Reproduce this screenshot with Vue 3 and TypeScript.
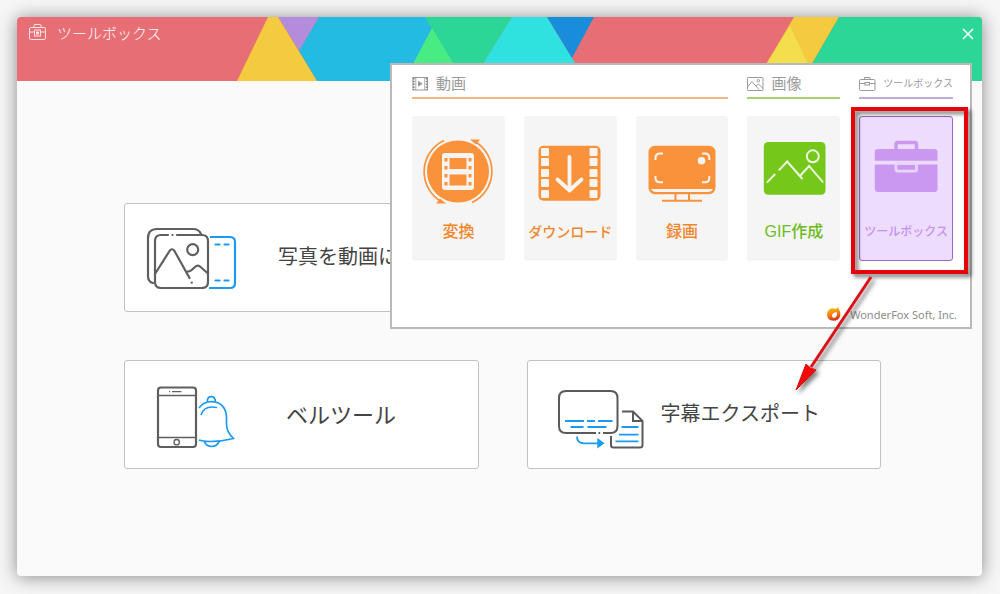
<script setup lang="ts">
import { ref } from 'vue'

type ToolId = 'convert' | 'download' | 'record' | 'gif' | 'toolbox'

interface Tool {
  id: ToolId
  label: string
  tone: string
}

interface Action {
  id: 'photo' | 'bell' | 'subtitle'
  label: string
}

const tools: Tool[] = [
  { id: 'convert', label: '変換', tone: 'orange' },
  { id: 'download', label: 'ダウンロード', tone: 'orange medium' },
  { id: 'record', label: '録画', tone: 'orange' },
  { id: 'gif', label: 'GIF作成', tone: 'green' },
  { id: 'toolbox', label: 'ツールボックス', tone: 'purple small' },
]

const actions: Action[] = [
  { id: 'photo', label: '写真を動画に' },
  { id: 'bell', label: 'ベルツール' },
  { id: 'subtitle', label: '字幕エクスポート' },
]

const selected = ref<ToolId>('toolbox')
const perforations: number[] = [11, 21, 32, 42, 53]
const filmHoles: number[] = [21, 29, 37, 45]
</script>

<template>
  <div class="page">
    <div class="window">
      <header class="banner">
        <svg class="banner-art" viewBox="0 0 965 64" preserveAspectRatio="none" aria-hidden="true">
          <rect width="965" height="64" fill="#e76e75" />
          <polygon points="261,0 302,0 282,34" fill="#b38cdb" />
          <polygon points="302,0 409,0 415,12 387,64 300,64 282,34" fill="#24bbe3" />
          <polygon points="251,0 261,0 300,64 220,64" fill="#f4ca3e" />
          <polygon points="408,0 495,0 455,64 446,64" fill="#2cd697" />
          <polygon points="415,11 387,64 447,64" fill="#49ec83" />
          <polygon points="495,0 530,0 569,64 455,64" fill="#30e2df" />
          <polygon points="530,0 577,0 555,41" fill="#1a8dda" />
          <polygon points="777,0 822,0 785,64 739,64" fill="#f4ca3e" />
          <polygon points="773,9 739,64 799,64" fill="#f4de4e" />
          <polygon points="822,0 965,0 965,64 785,64" fill="#2cd697" />
        </svg>
        <h1 class="title">
          <svg class="title-icon" viewBox="0 0 18 16" aria-hidden="true">
            <g fill="none" stroke="#fbe3e4" stroke-width="1">
              <rect x="0.500" y="3.500" width="16" height="12" rx="1.500" />
              <path d="M5 3.500V1.500Q5 .500 6 .500h5Q12 .500 12 1.500v2M.500 8h5M11.500 8h5" />
              <rect x="5.500" y="6" width="6" height="6" />
              <rect x="7.500" y="8" width="2" height="2" />
            </g>
          </svg>
          ツールボックス
        </h1>
        <button class="close" type="button" aria-label="閉じる">
          <svg viewBox="0 0 12 12" aria-hidden="true">
            <path d="M1 1l10 10M11 1l-10 10" stroke="#fff" stroke-width="1.500" />
          </svg>
        </button>
      </header>

      <main class="actions">
        <button v-for="a in actions" :key="a.id" type="button" class="action" :class="a.id">
          <svg class="action-icon" viewBox="0 0 96 73" aria-hidden="true">
            <g v-if="a.id === 'photo'" fill="none" stroke-width="2.200" stroke-linecap="round">
              <g stroke="#5f5f5f">
                <path d="M57 13Q55 8 49 8H13Q4 8 4 17V55Q4 61 9 62" />
                <path d="M33 14H58Q64 14 64 20V61Q64 67 58 67H17Q11 67 11 61V20Q11 14 17 14H24M28.500 14h.1" />
                <circle cx="48.700" cy="28.700" r="5.500" />
                <path d="M11 53L25.500 30Q28 26.500 30.500 30L45.500 57M47.700 61.700h.1" />
                <path d="M43.300 50.500Q46 51 51 46Q53.500 43.500 56 45.500L64 52.500" />
              </g>
              <path stroke="#1a9af0" stroke-linecap="butt" d="M66 16H86Q91 16 91 21V62Q91 67 86 67H65" />
              <path stroke="#1a9af0" d="M71.500 23.500h4M80.500 23.500h4M71.500 59.500h4M80.500 59.500h4" />
            </g>
            <g v-else-if="a.id === 'bell'" fill="none">
              <g stroke="#5f5f5f">
                <rect x="14" y="9.500" width="38" height="59.500" rx="3" stroke-width="2.200" />
                <path d="M14 17.500H52M14 59.500H52M28 13.700H37.500M25 13.700h1.200" stroke-width="1.300" />
                <circle cx="32.700" cy="64.200" r="2.700" stroke-width="1.300" />
              </g>
              <g stroke="#1a9af0" stroke-width="1.700">
                <path d="M63.300 23.700Q63.300 18.700 67.300 18.700Q71.300 18.700 71.300 23.700" />
                <path d="M55 30Q59.500 23.700 67.300 23.700C77 23.700 82.500 30 82.500 40V46Q82.500 54 89.500 60.500Q78 63.500 66 63.500Q58 63.300 55 62" />
                <path d="M57 37Q60 27 73 29.500M60.300 63.700Q62.500 68.500 67.500 68.500Q73 68.500 75 63.700" />
              </g>
            </g>
            <g v-else fill="none">
              <g stroke="#5a5a5a" stroke-width="2">
                <path d="M49 55H19Q12 55 12 48V20Q12 13 19 13H63.500Q70.500 13 70.500 20V48Q70.500 55 63.500 55H56M51.500 55h1.700" />
                <path d="M75 33.500H86L95.500 43V67Q95.500 69.500 93 69.500H66.500Q64 69.500 64 67V58M86 33.500V43H95.500" />
              </g>
              <path stroke="#1a9af0" stroke-width="1.800" d="M18 43H37M40 43h8M51 43H65.500M23.500 49H36.500M40.500 49H59.500M74.500 49H91.500M72 56.700H91.500M68.500 63.300H91.500M30 58.500Q30 65.300 37 65.300H51" />
              <polygon points="50.300,60 57.500,65.300 50.300,70.600" fill="#1a9af0" />
            </g>
          </svg>
          <span class="action-label">{{ a.label }}</span>
        </button>
      </main>

      <section class="panel">
        <div class="grid">
          <h2 class="group video">
            <svg viewBox="0 0 17 16" aria-hidden="true">
              <rect x="1" y="1.500" width="14.500" height="12.500" fill="none" stroke="#999" stroke-width="1" />
              <path d="M1.700 2V14M14.800 2V14" stroke="#888" stroke-width="2" stroke-dasharray="1.500 1.300" />
              <path d="M3.800 1.500V14M12.700 1.500V14" stroke="#999" stroke-width=".8" />
              <polygon points="6,4.800 10.800,7.800 6,10.800" fill="#999" />
            </svg>
            動画
          </h2>
          <h2 class="group image">
            <svg viewBox="0 0 17 16" aria-hidden="true">
              <g fill="none" stroke="#999" stroke-width="1">
                <rect x=".500" y="1.500" width="15.500" height="13" rx=".800" />
                <path d="M.800 10.500L5 5.500L12 13.500M9 9.800L11.500 8L16 12.500" />
                <circle cx="11.300" cy="4.800" r="1.300" />
              </g>
            </svg>
            画像
          </h2>
          <h2 class="group box">
            <svg viewBox="0 0 17 16" aria-hidden="true">
              <g fill="none" stroke="#999" stroke-width="1">
                <rect x=".500" y="3.500" width="15.500" height="11" rx="1.200" />
                <path d="M5.500 3.500V1.500H11V3.500M.500 7.500H6M10.500 7.500H16" />
                <rect x="6" y="6.500" width="4.500" height="2.500" />
              </g>
            </svg>
            ツールボックス
          </h2>

          <div v-for="t in tools" :key="t.id" class="cell">
            <button
              type="button"
              class="tool"
              :class="[t.tone, { selected: selected === t.id }]"
              :aria-pressed="selected === t.id"
              @click="selected = t.id"
            >
              <svg class="tool-icon" viewBox="0 0 72 68" aria-hidden="true">
                <g v-if="t.id === 'convert'">
                  <circle cx="36" cy="34.500" r="31" fill="#f9923a" />
                  <g fill="none" stroke="#f9923a" stroke-width="1.700">
                    <path d="M22 3.500A34.500 34.500 0 0 0 20 65" />
                    <path d="M50 65.500A34.500 34.500 0 0 0 52 4" />
                  </g>
                  <path d="M14 66.500H24L18 61.500ZM58 2.500H48L54 7.500Z" fill="#f9923a" />
                  <rect x="20" y="16" width="32" height="37" rx="3" fill="#f8f4f1" />
                  <path d="M27.500 21H44.500V32H27.500ZM27.500 37.500H44.500V48.500H27.500Z" fill="#f9923a" />
                  <g fill="#f9923a">
                    <rect v-for="y in filmHoles" :key="y" x="22.500" :y="y" width="3" height="3.500" />
                    <rect v-for="y in filmHoles" :key="'r' + y" x="46.500" :y="y" width="3" height="3.500" />
                  </g>
                </g>
                <g v-else-if="t.id === 'download'">
                  <rect x="4.500" y="8.700" width="62" height="55" rx="5" fill="#f9923a" />
                  <g fill="#f8f4f1">
                    <rect v-for="y in perforations" :key="y" x="7" :y="y" width="8" height="8" rx="1" />
                    <rect v-for="y in perforations" :key="'r' + y" x="55.500" :y="y" width="8" height="8" rx="1" />
                  </g>
                  <path d="M35.500 20V53M23.500 42.500L35.500 53.500L47.500 42.500" fill="none" stroke="#f8f4f1" stroke-width="3.800" stroke-linecap="round" stroke-linejoin="round" />
                </g>
                <g v-else-if="t.id === 'record'">
                  <rect x="2.500" y="8.700" width="67" height="48.500" rx="6.500" fill="#f9923a" />
                  <path d="M5 52H67Q65.500 55 62 55H10Q6.500 55 5 52Z" fill="#f8f4f1" />
                  <path d="M29.500 57V63.500M43 57V63.500M16 63.700H56" stroke="#f9923a" stroke-width="2" />
                  <path d="M9.500 23V21Q9.500 16.500 14 16.500H17M56 16.500H59Q63.300 16.500 63.300 21V23M9.500 39V41Q9.500 45.300 14 45.300H17M56 45.300H59Q63.300 45.300 63.300 41V39" fill="none" stroke="#f8f4f1" stroke-width="2" />
                  <circle cx="55.500" cy="23.700" r="3.800" fill="#f8f4f1" />
                </g>
                <g v-else-if="t.id === 'gif'">
                  <rect x="5.800" y="5" width="61.700" height="52.700" rx="4.500" fill="#75c819" />
                  <g fill="none" stroke="#f1f8e8" stroke-width="1.900">
                    <circle cx="54.800" cy="19.300" r="6" />
                    <path d="M8.800 45.700L17.200 37M20.800 33.300L29.200 24.500L44.500 42M41.500 39.500L51 29L65.200 45.500" />
                  </g>
                </g>
                <g v-else>
                  <rect x="26" y="5.500" width="20.500" height="9" rx="2" fill="none" stroke="#ca98f1" stroke-width="3.500" />
                  <path d="M8 12H64.500Q67.500 12 67.500 15V23.700H4.800V15Q4.800 12 8 12ZM4.800 27.500H67.500V52Q67.500 55 64.500 55H8Q4.800 55 4.800 52Z" fill="#ca98f1" />
                  <path d="M26 26.500V32.500Q26 34.200 27.700 34.200H44.800Q46.500 34.200 46.500 32.500V26.500Z" fill="#ca98f1" stroke="#e9d4fc" stroke-width="2.800" />
                </g>
              </svg>
              <span>{{ t.label }}</span>
            </button>
            <template v-if="selected === t.id">
              <span class="marker"></span>
              <svg class="arrow" viewBox="0 0 100 130" aria-hidden="true">
                <path d="M84 6L24 96" stroke="#dd1216" stroke-width="3" />
                <polygon points="9,119 19,93 23.500,97 29,99" fill="#fb0505" stroke="#d40f12" stroke-width="1" />
              </svg>
            </template>
          </div>
        </div>
        <footer class="brand">
          <svg viewBox="0 0 16 16" aria-hidden="true">
            <defs>
              <linearGradient id="flame" x1="0" y1="0" x2="0.300" y2="1">
                <stop offset="0" stop-color="#ffd21c" />
                <stop offset="0.550" stop-color="#f68a16" />
                <stop offset="1" stop-color="#d9381c" />
              </linearGradient>
            </defs>
            <path fill="url(#flame)" fill-rule="evenodd" d="M12 .500Q12.300 2 13 3.500Q15 6 14.300 9.500Q13 14.800 7.500 14.800Q1 14.300 1 8.500Q1.200 3.800 5.500 2.300Q8 1.800 9.500 3Q11.500 2.500 12 .500ZM11 6Q6 6.500 6 9.800Q6.300 12 8.300 12Q11.500 11 11 6Z" />
          </svg>
          WonderFox Soft, Inc.
        </footer>
      </section>
    </div>
  </div>
</template>

<style>
body {
  margin: 0;
  background: #f6f6f6;
}
</style>

<style scoped>
.page {
  box-sizing: border-box;
  min-height: 100vh;
  padding: 17px 18px 18px 17px;
  display: flex;
  font-family: "Liberation Sans", "Noto Sans CJK JP", sans-serif;
}

.window {
  position: relative;
  flex: 1;
  display: flex;
  flex-direction: column;
  background: #fafafa;
  border-radius: 4px;
  box-shadow: 0 1px 18px rgba(0, 0, 0, 0.45);
}

.banner {
  position: relative;
  height: 64px;
  display: flex;
  justify-content: space-between;
  align-items: flex-start;
  overflow: hidden;
  border-radius: 4px 4px 0 0;
}

.banner-art {
  position: absolute;
  inset: 0;
  width: 100%;
  height: 100%;
}

.title {
  position: relative;
  display: flex;
  align-items: center;
  gap: 10px;
  height: 30px;
  margin: 0 0 0 12px;
  color: #fff;
  font-size: 15px;
  font-weight: 300;
}

.title-icon {
  width: 18px;
  height: 16px;
}

.close {
  position: relative;
  display: flex;
  padding: 11px 8px;
  border: 0;
  background: none;
}

.close svg {
  width: 12px;
  height: 12px;
}

.actions {
  display: grid;
  grid-template-columns: 1fr 1fr;
  gap: 48px;
  padding: 122px 101px 60px 107px;
}

.action {
  display: flex;
  align-items: center;
  height: 109px;
  padding: 0 0 0 19px;
  border: 1px solid #c2c2c2;
  border-radius: 3px;
  background: #fff;
  color: #444;
  font-family: inherit;
  font-size: 20px;
  font-weight: 400;
  white-space: nowrap;
}

.action-icon {
  width: 96px;
  height: 73px;
  overflow: visible;
}

.action-label {
  padding-bottom: 4px;
}

.photo {
  grid-column: 1 / 2;
  gap: 38px;
}

.bell {
  grid-row: 2;
  gap: 46px;
  font-size: 22px;
}

.subtitle {
  grid-row: 2;
  gap: 18px;
}

.panel {
  position: absolute;
  top: 46px;
  left: 373px;
  right: 10px;
  border: 2px solid #b9b9b9;
  background: #fff;
}

.grid {
  display: grid;
  grid-template-columns: repeat(5, 1fr);
  gap: 17px 19px;
  padding: 0 17px 0 20px;
}

.group {
  box-sizing: border-box;
  display: flex;
  align-items: center;
  gap: 7px;
  height: 34px;
  margin: 0;
  padding-top: 6px;
  border-bottom: 2px solid;
  color: #999;
  font-size: 15px;
  font-weight: 400;
  line-height: 20px;
  white-space: nowrap;
}

.group svg {
  flex: none;
  width: 17px;
  height: 16px;
}

.video {
  grid-column: span 3;
  border-color: #f2b687;
}

.image {
  border-color: #a8cf73;
}

.box {
  border-color: #c2add6;
  font-size: 10px;
}

.cell {
  position: relative;
  display: flex;
}

.tool {
  flex: 1;
  min-width: 0;
  display: flex;
  flex-direction: column;
  align-items: center;
  gap: 15px;
  height: 145px;
  padding: 20px 0 0;
  border: 1px solid #f5f5f5;
  border-radius: 3px;
  background: #f5f5f5;
  font-family: inherit;
  font-size: 16px;
  font-weight: 500;
  line-height: 24px;
  white-space: nowrap;
}

.tool-icon {
  width: 72px;
  height: 68px;
}

.orange {
  color: #f0862c;
}

.green {
  color: #6cbb1c;
}

.purple {
  color: #c391ee;
}

.medium {
  font-size: 14px;
}

.small {
  font-size: 12px;
}

.selected {
  border-color: #9a6ac4;
  background: #eddcfe;
}

.marker {
  position: absolute;
  inset: -9px -15px -13px -8px;
  border: 4px solid #e60409;
  pointer-events: none;
  filter: drop-shadow(3px 3px 2px rgba(0, 0, 0, 0.55));
}

.arrow {
  position: absolute;
  top: 155px;
  left: -72px;
  width: 100px;
  height: 130px;
  pointer-events: none;
  filter: drop-shadow(3px 3px 2px rgba(0, 0, 0, 0.5));
}

.brand {
  display: flex;
  align-items: center;
  justify-content: flex-end;
  gap: 8px;
  height: 24px;
  margin-top: 41px;
  padding: 0 13px 1px 0;
  color: #8c8c8c;
  font-family: "Noto Sans", "Noto Sans CJK JP", sans-serif;
  font-size: 11px;
}

.brand svg {
  width: 16px;
  height: 16px;
}
</style>
